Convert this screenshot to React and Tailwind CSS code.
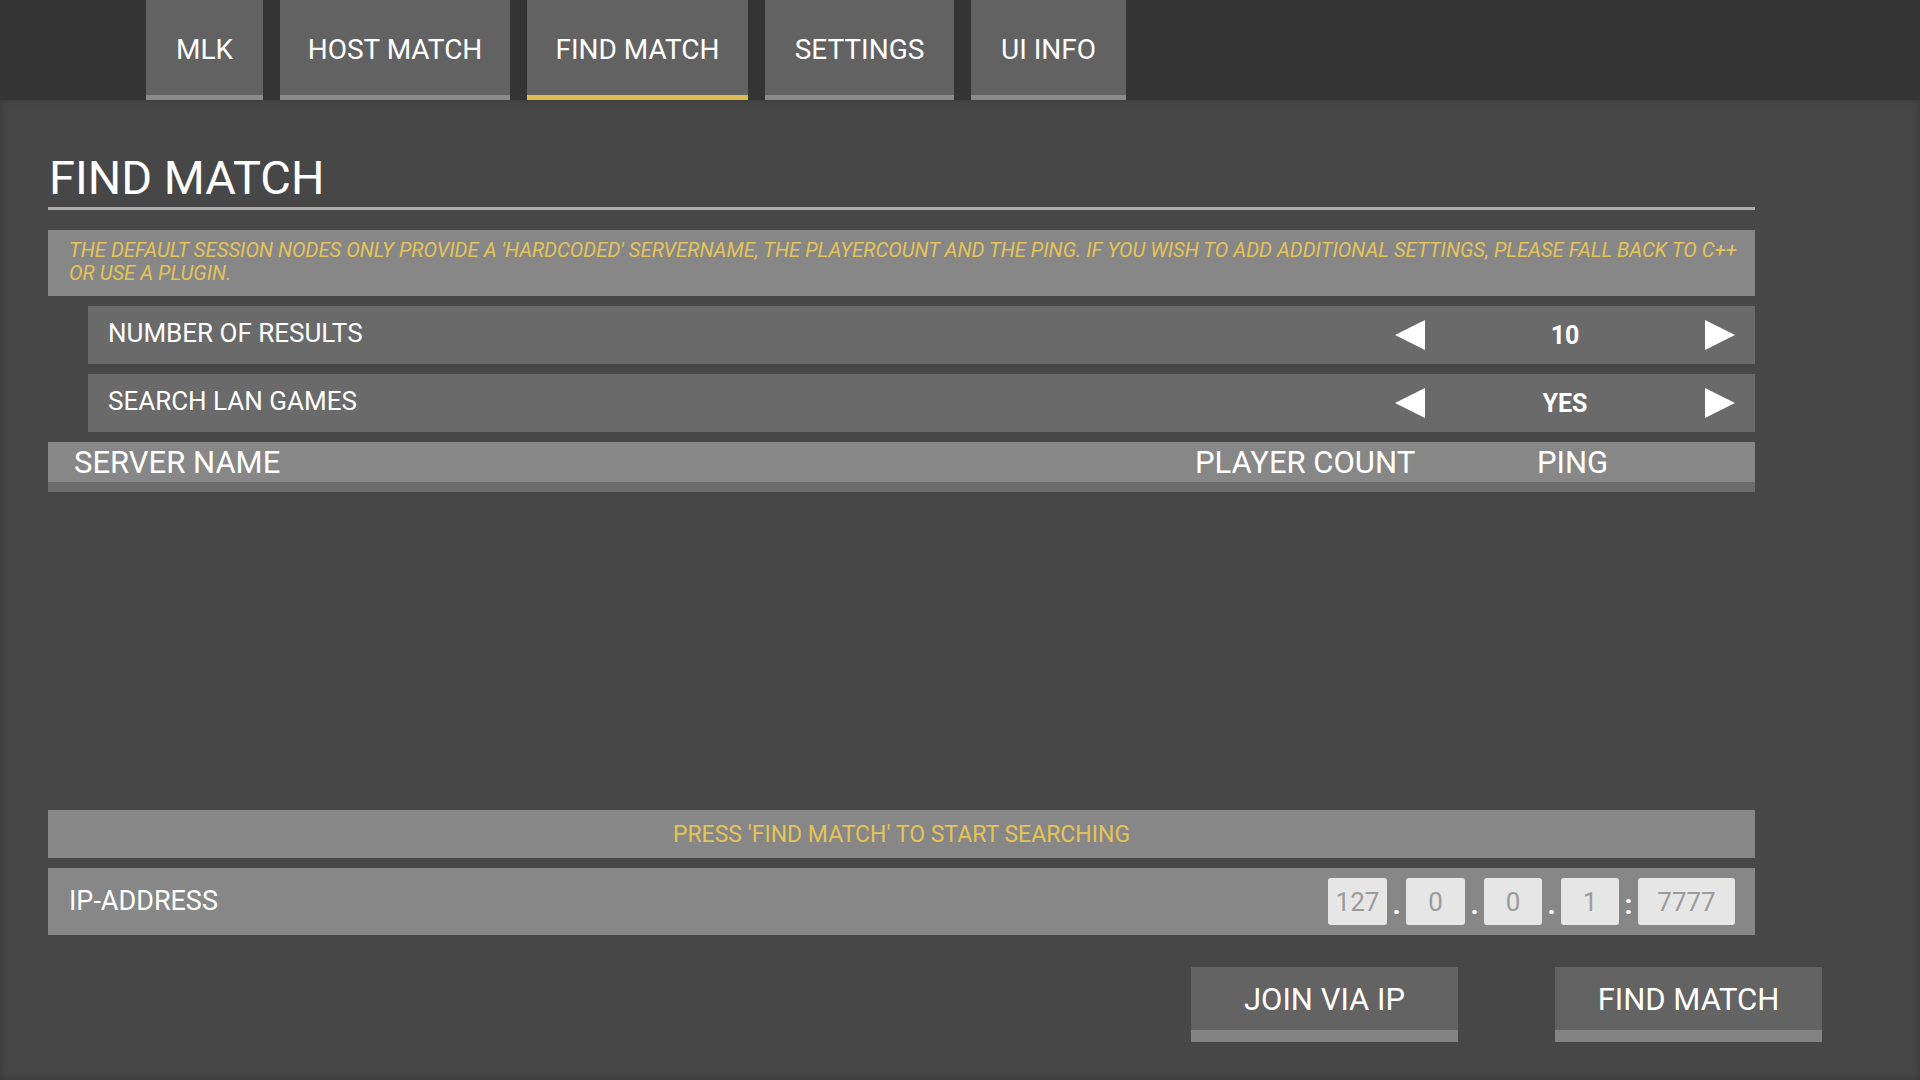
import React from "react";

const tabs = [
  { label: "MLK", w: "w-[117px]" },
  { label: "HOST MATCH", w: "w-[230px]" },
  { label: "FIND MATCH", w: "w-[221px]", active: true },
  { label: "SETTINGS", w: "w-[189px]" },
  { label: "UI INFO", w: "w-[155px]" },
];

function LeftArrow() {
  return (
    <svg width="30" height="30" viewBox="0 0 30 30">
      <polygon points="30,0 30,30 0,15" fill="#ffffff" />
    </svg>
  );
}
function RightArrow() {
  return (
    <svg width="30" height="30" viewBox="0 0 30 30">
      <polygon points="0,0 30,15 0,30" fill="#ffffff" />
    </svg>
  );
}

function OptionRow({ label, value }) {
  return (
    <div className="ml-[40px] h-[58px] bg-[#6a6a6a] flex items-center justify-between pl-[20px] pr-[20px]">
      <span className="text-[26px] leading-none text-white pb-[5px]">{label}</span>
      <div className="w-[340px] flex items-center justify-between">
        <LeftArrow />
        <span className="text-[25px] leading-none font-bold text-white">{value}</span>
        <RightArrow />
      </div>
    </div>
  );
}

function IpBox({ w, children }) {
  return (
    <div className={`${w} h-[47px] rounded-[3px] bg-[#e6e6e6] flex items-center justify-center text-[26px] leading-none text-[#9b9b9b]`}>
      {children}
    </div>
  );
}

function Sep({ children }) {
  return (
    <div className="w-[19px] h-[47px] flex items-end justify-center pb-[6px] text-[28px] leading-none font-bold text-white">
      {children}
    </div>
  );
}

function Button({ children }) {
  return (
    <div className="w-[267px] h-[75px] bg-[#636363] flex flex-col">
      <div className="flex-1 flex items-center justify-center text-[31px] leading-none text-white pt-[2px]">
        {children}
      </div>
      <div className="h-[12px] bg-[#838383]" />
    </div>
  );
}

export default function App() {
  return (
    <div className="w-[1920px] h-[1080px] flex flex-col bg-[#474747] font-['Roboto',sans-serif] overflow-hidden">
      {/* Top bar */}
      <div className="h-[100px] bg-[#343434] flex pl-[146px] gap-[17px]">
        {tabs.map((t) => (
          <div key={t.label} className={`${t.w} h-[100px] bg-[#626262] flex flex-col`}>
            <div className="flex-1 flex items-center justify-center text-[28px] leading-none text-white pt-[4px]">
              {t.label}
            </div>
            <div className={t.active ? "h-[5px] bg-[#dcbc4e]" : "h-[5px] bg-[#8a8a8a]"} />
          </div>
        ))}
      </div>

      {/* Main */}
      <div className="flex-1 flex flex-col shadow-[inset_0_0_10px_rgba(0,0,0,0.22)]">
        <div className="w-[1707px] ml-[48px] flex flex-col pt-[54px]">
          <h1 className="h-[48px] text-[47px] leading-none text-white pl-[1px]">FIND MATCH</h1>
          <div className="mt-[5px] h-[3px] bg-[#adadad]" />

          <div className="mt-[20px] h-[66px] bg-[#878787] pt-[9px] px-[21px] text-[20.3px] leading-[23px] italic text-[#e4c458] whitespace-nowrap">
            THE DEFAULT SESSION NODES ONLY PROVIDE A 'HARDCODED' SERVERNAME, THE PLAYERCOUNT AND THE PING. IF YOU WISH TO ADD ADDITIONAL SETTINGS, PLEASE FALL BACK TO C++
            <br />
            OR USE A PLUGIN.
          </div>

          <div className="mt-[10px] flex flex-col gap-[10px]">
            <OptionRow label="NUMBER OF RESULTS" value="10" />
            <OptionRow label="SEARCH LAN GAMES" value="YES" />
          </div>

          <div className="mt-[10px] flex flex-col">
            <div className="h-[40px] bg-[#878787] flex items-center text-[31px] leading-none text-white">
              <span className="flex-1 pl-[26px]">SERVER NAME</span>
              <span className="w-[342px]">PLAYER COUNT</span>
              <span className="w-[218px]">PING</span>
            </div>
            <div className="h-[10px] bg-[#6b6b6b]" />
          </div>

          <div className="h-[318px]" />

          <div className="h-[48px] bg-[#878787] flex items-center justify-center text-[23px] leading-none text-[#e4c458]">
            PRESS 'FIND MATCH' TO START SEARCHING
          </div>

          <div className="mt-[10px] h-[67px] bg-[#878787] flex items-center justify-between pl-[21px] pr-[20px]">
            <span className="text-[27px] leading-none text-white">IP-ADDRESS</span>
            <div className="flex items-center">
              <IpBox w="w-[59px]">127</IpBox>
              <Sep>.</Sep>
              <IpBox w="w-[59px]">0</IpBox>
              <Sep>.</Sep>
              <IpBox w="w-[58px]">0</IpBox>
              <Sep>.</Sep>
              <IpBox w="w-[58px]">1</IpBox>
              <Sep>:</Sep>
              <IpBox w="w-[97px]">7777</IpBox>
            </div>
          </div>
        </div>

        <div className="mt-[32px] flex justify-end gap-[97px] pr-[98px]">
          <Button>JOIN VIA IP</Button>
          <Button>FIND MATCH</Button>
        </div>
      </div>
    </div>
  );
}
